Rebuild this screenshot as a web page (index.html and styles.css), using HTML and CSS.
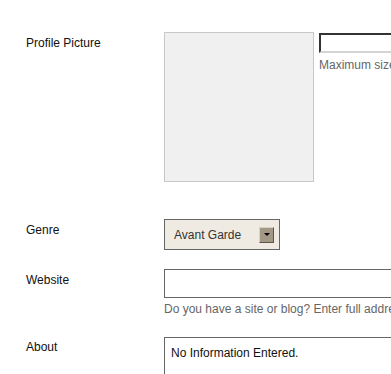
FILE: index.html
```html
<!DOCTYPE html>
<html lang="en">
<head>
    <meta charset="UTF-8">
    <title>Edit Profile</title>
    <link rel="stylesheet" href="styles.css">
</head>
<body>

<div class="profile-form">
    <!-- profile picture -->
    <div class="form-row row-picture">
        <div class="form-label">Profile Picture</div>
        <div class="form-field picture-field">
            <div class="picture-box"></div>
            <div class="upload">
                <input type="file" class="file-input">
                <div class="hint">Maximum size 700k. JPG, GIF, PNG.</div>
            </div>
        </div>
    </div>

    <!-- genre -->
    <div class="form-row row-genre">
        <div class="form-label">Genre</div>
        <div class="form-field">
            <div class="select-box">
                <span class="select-text">Avant Garde</span>
                <span class="select-arrow"></span>
            </div>
        </div>
    </div>

    <!-- website -->
    <div class="form-row row-website">
        <div class="form-label">Website</div>
        <div class="form-field">
            <input type="text" class="text-input">
            <div class="hint">Do you have a site or blog? Enter full address here.</div>
        </div>
    </div>

    <!-- about -->
    <div class="form-row row-about">
        <div class="form-label label-about">About</div>
        <div class="form-field">
            <textarea class="about-text">No Information Entered.</textarea>
        </div>
    </div>
</div>

</body>
</html>
```

FILE: styles.css
```css
body {
    margin: 0;
    padding: 0;
    background: #fff;
    font-family: "Liberation Sans", Arial, sans-serif;
    font-size: 12px;
    line-height: 14px;
    color: #111;
    overflow: hidden;
}

.profile-form {
    padding-top: 32px;
}

.form-row {
    display: flex;
    align-items: flex-start;
}

.form-label {
    width: 138px;
    flex-shrink: 0;
    padding-left: 26px;
    padding-top: 4px;
}

.label-about {
    padding-top: 3px;
}

.form-field {
    flex: 1;
}

/* 사진 영역 */
.picture-field {
    display: flex;
    align-items: flex-start;
}

.picture-box {
    width: 148px;
    height: 148px;
    background: #f0f0f0;
    border: 1px solid #c8c8c8;
    flex-shrink: 0;
}

.upload {
    margin-left: 5px;
    padding-top: 1px;
}

.file-input {
    display: block;
    box-sizing: border-box;
    width: 220px;
    height: 20px;
    margin: 0;
    padding: 0;
    border-top: 2px solid #333;
    border-left: 2px solid #333;
    border-bottom: 2px solid #d4d4d4;
    border-right: 2px solid #d4d4d4;
    background: #fff;
    color: transparent;
    font-size: 0;
}

.file-input::file-selector-button {
    display: none;
}

.hint {
    margin-top: 5px;
    color: #666;
    white-space: nowrap;
}

.row-genre {
    margin-top: 37px;
}

/* 셀렉트 박스 */
.select-box {
    box-sizing: border-box;
    width: 116px;
    height: 31px;
    border: 1px solid #666;
    background: #efebe3;
    display: flex;
    align-items: center;
    justify-content: space-between;
    padding: 0 5px 0 9px;
    color: #333;
}

.select-arrow {
    box-sizing: border-box;
    width: 15px;
    height: 16px;
    background: #a39886;
    border-top: 1px solid #d9d2c6;
    border-left: 1px solid #d9d2c6;
    border-right: 1px solid #5e564c;
    border-bottom: 1px solid #5e564c;
    display: flex;
    align-items: center;
    justify-content: center;
}

.select-arrow::after {
    content: "";
    width: 0;
    height: 0;
    border-left: 3px solid transparent;
    border-right: 3px solid transparent;
    border-top: 3px solid #000;
}

.row-website {
    margin-top: 19px;
}

.text-input {
    display: block;
    box-sizing: border-box;
    width: 260px;
    height: 29px;
    margin: 0;
    border: 1px solid #666;
    background: #fff;
}

.row-website .hint {
    margin-top: 4px;
}

.row-about {
    margin-top: 21px;
}

.about-text {
    display: block;
    box-sizing: border-box;
    width: 260px;
    height: 80px;
    margin: 0;
    padding: 8px 6px;
    border: 1px solid #666;
    font-family: "Liberation Sans", Arial, sans-serif;
    font-size: 12px;
    line-height: 14px;
    color: #111;
    resize: none;
}
```
